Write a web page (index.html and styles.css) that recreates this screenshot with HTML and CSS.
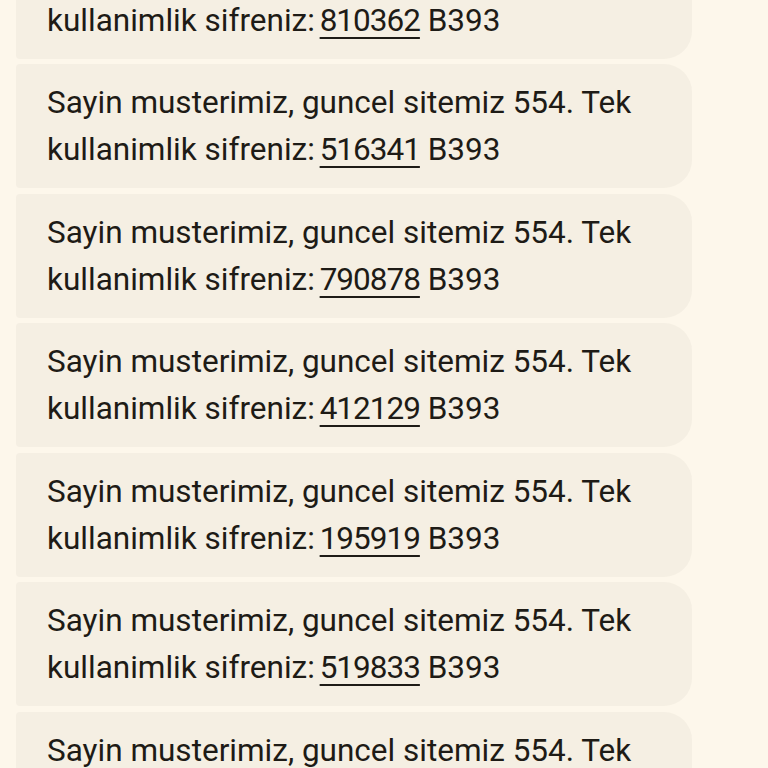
FILE: index.html
```html
<!DOCTYPE html>
<html lang="tr">
<head>
  <meta charset="UTF-8" />
  <meta name="viewport" content="width=device-width, initial-scale=1" />
  <title>Mesajlar</title>
  <link rel="stylesheet" href="styles.css">
</head>
<body>
  <div id="thread">
    <div class="bubble">Sayin musterimiz, guncel sitemiz 554. Tek kullanimlik sifreniz: <u class="code">810362</u> B393</div>
    <div class="bubble">Sayin musterimiz, guncel sitemiz 554. Tek kullanimlik sifreniz: <u class="code">516341</u> B393</div>
    <div class="bubble">Sayin musterimiz, guncel sitemiz 554. Tek kullanimlik sifreniz: <u class="code">790878</u> B393</div>
    <div class="bubble">Sayin musterimiz, guncel sitemiz 554. Tek kullanimlik sifreniz: <u class="code">412129</u> B393</div>
    <div class="bubble">Sayin musterimiz, guncel sitemiz 554. Tek kullanimlik sifreniz: <u class="code">195919</u> B393</div>
    <div class="bubble">Sayin musterimiz, guncel sitemiz 554. Tek kullanimlik sifreniz: <u class="code">519833</u> B393</div>
    <div class="bubble">Sayin musterimiz, guncel sitemiz 554. Tek kullanimlik sifreniz: <u class="code">284517</u> B393</div>
  </div>
</body>
</html>
```

FILE: styles.css
```css
body {
  margin: 0;
  background: #fdf7eb;
  font-family: Roboto, "Noto Sans", sans-serif;
  color: #1e1b16;
  height: 100vh;
  overflow: hidden;
}

#thread {
  display: flex;
  flex-direction: column;
  gap: 5.5px;
  padding-left: 16px;
  margin-top: -65.5px;
}

.bubble {
  width: 676px;
  box-sizing: border-box;
  padding: 15px 30px 15px 31px;
  background: #f5efe3;
  border-radius: 4px 28px 28px 4px;
  font-size: 31.5px;
  line-height: 47px;
}

/* digits in the code run a bit tighter than Roboto's tabular figures */
.code {
  margin-left: -3px;
  letter-spacing: -1px;
  text-decoration-thickness: 2px;
  text-underline-offset: 6px;
}
```
